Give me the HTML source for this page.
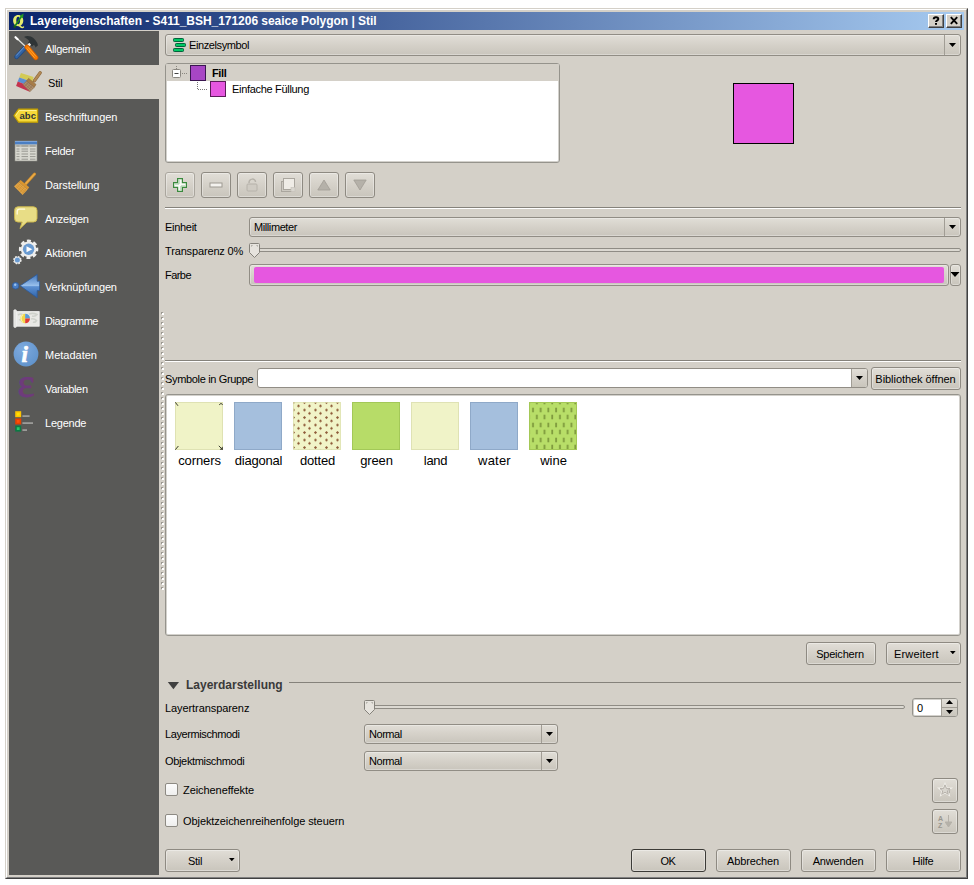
<!DOCTYPE html>
<html lang="de">
<head>
<meta charset="utf-8">
<title>Layereigenschaften - S411_BSH_171206 seaice Polygon | Stil</title>
<style>
html,body{margin:0;padding:0;background:#fff;}
body{width:974px;height:885px;position:relative;overflow:hidden;font-family:"Liberation Sans",sans-serif;font-size:11px;color:#000;}
*{box-sizing:border-box;}
.abs{position:absolute;}
#win{left:5px;top:8px;width:963px;height:871px;background:#d4d0c8;
 border-top:1px solid #d4d0c8;border-left:1px solid #d4d0c8;border-right:1px solid #404040;border-bottom:1px solid #404040;}
#win2{left:6px;top:9px;width:961px;height:869px;
 border-top:1px solid #fff;border-left:1px solid #fff;border-right:1px solid #808080;border-bottom:1px solid #808080;}
#title{left:9px;top:12px;width:955px;height:18px;background:linear-gradient(to right,#0a246a 0%,#a6caf0 100%);}
#title .t{position:absolute;left:21px;top:2px;color:#fff;font-weight:bold;font-size:12px;letter-spacing:-0.04px;line-height:14px;white-space:nowrap;}
.tb{position:absolute;top:2px;width:16px;height:14px;background:#d4d0c8;border-top:1px solid #fff;border-left:1px solid #fff;border-right:1px solid #404040;border-bottom:1px solid #404040;box-shadow:inset -1px -1px 0 #808080;}
#side{left:9px;top:31px;width:150px;height:844px;background:#595957;}
.it{position:absolute;left:0;width:150px;height:34px;color:#fff;white-space:nowrap;}
.it span{position:absolute;left:36px;top:11px;line-height:14px;}
.it svg{position:absolute;}
.it.sel{background:#d4d0c8;color:#000;}
.it.sel span{left:39px;}
.lbl{position:absolute;white-space:nowrap;line-height:14px;}
.btn{position:absolute;border:1px solid #8e8a82;border-radius:3px;background:linear-gradient(#e1ded7,#d6d2ca 45%,#c9c5bc);box-shadow:inset 0 0 0 1px rgba(255,255,255,.35);text-align:center;line-height:23px;white-space:nowrap;padding-right:1px;}
.combo{position:absolute;border:1px solid #918d85;border-radius:3px;background:linear-gradient(#e1ded7,#d6d2ca 45%,#c9c5bc);box-shadow:inset 0 0 0 1px rgba(255,255,255,.3);line-height:18px;white-space:nowrap;}
.combo .arr{position:absolute;right:0;top:0;bottom:0;width:16px;border-left:1px solid #a19d95;}
.tri{position:absolute;width:7px;height:4px;background:#000;clip-path:polygon(0 0,100% 0,50% 100%);}
.tri.up{clip-path:polygon(50% 0,100% 100%,0 100%);}
.hline{position:absolute;height:2px;border-top:1px solid #85827b;border-bottom:1px solid #fff;}
.box{position:absolute;background:#fff;border:1px solid #95938c;border-radius:3px;box-shadow:inset 0 0 0 1px #d3d1cc;}
.cb{position:absolute;width:13px;height:13px;border:1px solid #8d8a83;border-radius:2px;background:linear-gradient(#fcfcfc,#efefee);}
.sym{position:absolute;top:402px;width:48px;height:48px;}
.sl{position:absolute;top:453px;width:70px;text-align:center;font-size:13px;line-height:15px;white-space:nowrap;}
</style>
</head>
<body>
<div id="win" class="abs"></div>
<div id="win2" class="abs"></div>

<!-- title bar -->
<div id="title" class="abs">
 <svg style="position:absolute;left:2px;top:1px" width="16" height="16" viewBox="0 0 16 16">
  <path fill-rule="evenodd" fill="#e6ec6c" d="M7.2 2C10.2 2 12.3 4.4 12.3 7.6C12.3 10.8 10.2 13.2 7.2 13.2C4.2 13.2 2.1 10.8 2.1 7.6C2.1 4.4 4.2 2 7.2 2ZM7.2 3.8C6 3.8 5.3 5.4 5.3 7.6C5.3 9.8 6 11.4 7.2 11.4C8.4 11.4 9.1 9.8 9.1 7.6C9.1 5.4 8.4 3.8 7.2 3.8Z"/>
  <path d="M6.4 11.2C8 11 9.4 12.2 10.4 13.2C11.4 14 12.4 13.8 13 13L13.2 14.2C12.4 15.4 10.6 15.6 9.4 14.6C8.4 13.8 7.6 12.8 6.4 12.8Z" fill="#e6ec6c"/>
  <path d="M3.6 13.6L10.6 3.2" stroke="#1c861c" stroke-width="1.7"/>
  <path d="M12.6 0.6L12 5.2L8.6 3Z" fill="#249a24"/>
  <path d="M2.2 12.6L5.6 13.4L3.2 15.6Z" fill="#145a14"/>
 </svg>
 <div class="t">Layereigenschaften - S411_BSH_171206 seaice Polygon | Stil</div>
 <div class="tb" style="left:919px"><svg width="14" height="12" viewBox="0 0 14 12" style="position:absolute;left:0;top:0"><path d="M4.7 4.3 C4.7 1.7 9.3 1.7 9.3 4 C9.3 5.4 7 5.2 7 7" fill="none" stroke="#000" stroke-width="2"/><rect x="6" y="8" width="2" height="1.8" fill="#000"/></svg></div>
 <div class="tb" style="left:937px"><svg width="14" height="12" viewBox="0 0 14 12" style="position:absolute;left:0;top:0"><path d="M3.8 2.2 L10.2 8.8 M10.2 2.2 L3.8 8.8" stroke="#000" stroke-width="1.9"/></svg></div>
</div>

<!-- sidebar -->
<div id="side" class="abs">
 <div class="it" style="top:0"><svg style="left:4px;top:4px" width="26" height="26" viewBox="0 0 26 26"><path d="M12.2 12.6 L3.6 21.8" stroke="#1f4a86" stroke-width="4.6" stroke-linecap="round"/><path d="M12.2 12.6 L3.6 21.8" stroke="#3465a4" stroke-width="3" stroke-linecap="round"/><path d="M11 12.2 L3.4 20.3" stroke="#6d97cf" stroke-width="1" stroke-linecap="round"/><path d="M4 3.6 L12.8 11.8" stroke="#dfe1dc" stroke-width="1.3"/><path d="M2.5 2.2 L4.6 4.2" stroke="#fff" stroke-width="2.2" stroke-linecap="round"/><path d="M11 2 C13.4 0.2 18 0.8 20.6 3.2 C23 5.4 25 8.4 24.9 10.6 L22.4 12.6 C22.3 11 21.6 10.2 20.4 10 L19 11.6 L15 7.8 L16.2 6 C14.8 4 13 3 11 2Z" fill="#2e3436"/><path d="M14.6 11.1 L17.2 8.8" stroke="#eeeeec" stroke-width="2.6"/><path d="M14 12.2 L22.8 22.6" stroke="#ce5c00" stroke-width="5" stroke-linecap="round"/><path d="M14 12.2 L22.8 22.6" stroke="#f57900" stroke-width="3.6" stroke-linecap="round"/><path d="M15.2 12.4 L23.2 21.6 M13.6 13.4 L21.6 22.8" stroke="#fcaf3e" stroke-width=".8"/></svg><span style="letter-spacing:-0.34px">Allgemein</span></div>
 <div class="it sel" style="top:34px"><svg style="left:6px;top:4px" width="27" height="26" viewBox="0 0 27 26"><path d="M5.9 4.1 L18.6 8.1 L17.3 13 L4.3 8.4Z" fill="#d3ca55"/><path d="M4.3 8.4 L17.3 13 L16 17.8 L2.7 12.6Z" fill="#5c8fd3"/><path d="M2.7 12.6 L16 17.8 L14.7 22.7 L1.1 16.9Z" fill="#c4334f"/><path d="M25.2 3.7 L19.4 11.8" stroke="#8f6a3c" stroke-width="3.2" stroke-linecap="round"/><path d="M25.2 3.7 L19.4 11.8" stroke="#b48a55" stroke-width="2" stroke-linecap="round"/><path d="M13.6 9.4 L21 15.4 L19.2 18.4 L11.4 12.2Z" fill="#a77c49" stroke="#8a6536" stroke-width=".6"/><path d="M11.4 12.2 L19.2 18.4 L14.9 22.6 L8 15.6Z" fill="#b08f6c" stroke="#8f7150" stroke-width=".6"/><path d="M10.3 13.3 L17.8 19.6 M9.2 14.5 L16.4 21 M13.2 13.8 L9.6 17.4 M15.2 15.4 L11.4 19.2 M17.2 17 L13.2 20.8" stroke="#8a6c4c" stroke-width=".5"/></svg><span style="letter-spacing:-0.2px">Stil</span></div>
 <div class="it" style="top:68px"><svg style="left:4px;top:9px" width="26" height="16" viewBox="0 0 26 16"><path d="M1 7.7 L5.6 1.2 H24.6 V14.2 H5.6Z" fill="#f5d93a" stroke="#c4a000" stroke-width="1.2" stroke-linejoin="round"/><path d="M2.6 7.7 L6.2 2.5 H23.4" fill="none" stroke="#fdf08c" stroke-width="1"/><text x="6.4" y="11.2" font-family="Liberation Sans,sans-serif" font-weight="bold" font-size="9.5" fill="#2e3436" letter-spacing=".1">abc</text></svg><span style="letter-spacing:-0.08px">Beschriftungen</span></div>
 <div class="it" style="top:102px"><svg style="left:5px;top:7px" width="24" height="22" viewBox="0 0 24 22"><rect x="1" y="1" width="22" height="20" fill="#d9d9d1" stroke="#8d8d85" stroke-width=".6"/><rect x="1" y="1" width="22" height="3.6" fill="#4b7fc3"/><rect x="1" y="1" width="22" height="1" fill="#7ba3d8"/><rect x="1" y="4.6" width="22" height="2.2" fill="#b9b9b1"/><path d="M2.5 6H5.5M7.5 6H14M16 6H21.5 M2.5 9H5.5M7.5 9H14M16 9H21.5 M2.5 11.2H5.5M7.5 11.2H14M16 11.2H21.5 M2.5 14H5.5M7.5 14H14M16 14H21.5 M2.5 16.6H5.5M7.5 16.6H14M16 16.6H21.5 M2.5 19.2H5.5M7.5 19.2H14M16 19.2H21.5" stroke="#8e8e88" stroke-width=".9"/></svg><span style="letter-spacing:-0.27px">Felder</span></div>
 <div class="it" style="top:136px"><svg style="left:4px;top:4px" width="26" height="26" viewBox="0 0 26 26"><path d="M21.6 3 L13 12.4" stroke="#c98a2a" stroke-width="3" stroke-linecap="round"/><path d="M21.6 3 L13 12.4" stroke="#e9aa48" stroke-width="1.6" stroke-linecap="round"/><path d="M7.6 9 L16.2 16.2 L14.6 18.4 L5.8 11Z" fill="#d9952f"/><path d="M5.8 11 L14.6 18.4 L9.6 24 L1 15.2Z" fill="#e2a648"/><path d="M4.8 12.2 L13.4 19.8 M3.6 13.4 L12.2 21.2 M2.4 14.4 L11 22.4 M7.6 12.6 L3.4 17.4 M9.6 14.2 L5.4 19.2 M11.6 16 L7.4 21 M13.4 17.6 L9 22.8" stroke="#c78728" stroke-width=".5"/></svg><span style="letter-spacing:-0.12px">Darstellung</span></div>
 <div class="it" style="top:170px"><svg style="left:4px;top:4px" width="26" height="26" viewBox="0 0 26 26"><path d="M5 1.8 H20.4 Q24 1.8 24 5.4 V13.4 Q24 17 20.4 17 H14 L7 23.6 L9.2 17 H5 Q1.6 17 1.6 13.4 V5.4 Q1.6 1.8 5 1.8Z" fill="#e8dd86" stroke="#cdb84e" stroke-width="1"/><path d="M4.2 9 V6.6 Q4.2 4.2 6.6 4.2 H11.6" fill="none" stroke="#fffbe0" stroke-width="1.3" stroke-linecap="round"/></svg><span style="letter-spacing:-0.29px">Anzeigen</span></div>
 <div class="it" style="top:204px"><svg style="left:3px;top:3px" width="28" height="28" viewBox="0 0 28 28"><circle cx="16.6" cy="11.3" r="8.3" fill="none" stroke="#eeeeec" stroke-width="2.8" stroke-dasharray="3.9 2.62" stroke-dashoffset="1.9"/><circle cx="16.6" cy="11.3" r="7.8" fill="#eeeeec"/><circle cx="16.6" cy="11.3" r="5.7" fill="#6a9bd1"/><path d="M14.5 8.3 L20.3 11.3 L14.5 14.3Z" fill="#fff"/><circle cx="5.4" cy="22.1" r="3.5" fill="none" stroke="#eeeeec" stroke-width="1.5" stroke-dasharray="1.7 1.05"/><circle cx="5.4" cy="22.1" r="3.4" fill="#eeeeec"/><circle cx="5.4" cy="22.1" r="2.5" fill="#6a9bd1"/></svg><span style="letter-spacing:-0.17px">Aktionen</span></div>
 <div class="it" style="top:238px"><svg style="left:2px;top:3px" width="30" height="28" viewBox="0 0 30 28"><defs><linearGradient id="ga" x1="0" y1="0" x2="0" y2="1"><stop offset="0" stop-color="#3f74ba"/><stop offset=".5" stop-color="#9cc3ee"/><stop offset=".52" stop-color="#5c90d2"/><stop offset="1" stop-color="#2f64aa"/></linearGradient></defs><circle cx="4.6" cy="13.8" r="3.3" fill="#4a7ec4" stroke="#2c5a9c" stroke-width=".8"/><circle cx="4.2" cy="12.8" r="1.2" fill="#9cc3ee"/><path d="M9.2 13.8 L26.2 2.4 V9.2 H28.6 V18.6 H26.2 V25.8Z" fill="url(#ga)" stroke="#2c5a9c" stroke-width=".8" stroke-linejoin="round"/></svg><span style="letter-spacing:-0.17px">Verknüpfungen</span></div>
 <div class="it" style="top:272px"><svg style="left:4px;top:6px" width="27" height="20" viewBox="0 0 27 20"><rect x="3.6" y="2.6" width="22.6" height="14.6" fill="#e9e9e5" stroke="#f6f6f4" stroke-width=".8"/><path d="M5 6 Q8 4 10 6 T14 9 M16 5 Q20 3.5 24 5.5 Q22 8 19 7 M18 10 Q21 9 23.5 11.5 Q22 14 20 13 M6 11 Q8 10 9 13" fill="none" stroke="#cfd2cb" stroke-width="1.6"/><rect x=".8" y=".8" width="2.6" height="17.6" rx=".8" fill="#e4e4e0" stroke="#fafafa" stroke-width=".6"/><path d="M12.2 4.7 A4.8 4.8 0 0 0 12.2 14.3Z" fill="#f2d648"/><path d="M12.2 4.7 A4.8 4.8 0 0 1 17 9.5 H12.2Z" fill="#5b9bd5"/><path d="M17 9.5 A4.8 4.8 0 0 1 12.2 14.3 V9.5Z" fill="#e23a32"/><path d="M10.2 5.4 A5 5 0 0 0 10.2 13.6" fill="none" stroke="#fbf0a8" stroke-width="1.2"/></svg><span style="letter-spacing:-0.42px">Diagramme</span></div>
 <div class="it" style="top:306px"><svg style="left:4px;top:4px" width="26" height="26" viewBox="0 0 26 26"><defs><radialGradient id="gi" cx=".35" cy=".3" r=".8"><stop offset="0" stop-color="#7eaade"/><stop offset="1" stop-color="#5f92cb"/></radialGradient></defs><circle cx="13" cy="13" r="12.4" fill="url(#gi)"/><text x="8.4" y="21.4" font-family="Liberation Serif,serif" font-style="italic" font-weight="bold" font-size="23" fill="#fff" stroke="#fff" stroke-width=".7">i</text></svg><span style="letter-spacing:0.00px">Metadaten</span></div>
 <div class="it" style="top:340px"><svg style="left:6px;top:2px" width="22" height="28" viewBox="0 0 22 28"><text x="2.4" y="24.4" font-family="Liberation Serif,serif" font-size="41" fill="#6e3b7c" stroke="#6e3b7c" stroke-width=".8">ε</text></svg><span style="letter-spacing:-0.33px">Variablen</span></div>
 <div class="it" style="top:374px"><svg style="left:5px;top:5px" width="24" height="24" viewBox="0 0 24 24"><rect x="1.2" y="1.2" width="6" height="6" fill="#ffc400"/><rect x="2.8" y="2.8" width="2.8" height="2.8" fill="#ffe100"/><rect x="1.2" y="8.4" width="6" height="6" fill="#e64100"/><rect x="2.8" y="10" width="2.8" height="2.8" fill="#ff4f0a"/><rect x="1.2" y="15.6" width="6" height="6" fill="#0b7a44"/><rect x="2.8" y="17.2" width="2.8" height="2.8" fill="#25c869"/><rect x="8.4" y="5.2" width="7.2" height="1.8" fill="#9b9b98"/><rect x="8.4" y="12.2" width="10.6" height="1.8" fill="#9b9b98"/><rect x="8.4" y="19.2" width="4.6" height="1.8" fill="#9b9b98"/></svg><span style="letter-spacing:-0.24px">Legende</span></div>
</div>

<!-- content placeholder -->
<div id="content">
<svg class="abs" style="left:161px;top:312px" width="3" height="278" viewBox="0 0 3 278"><defs><pattern id="sp" width="3" height="5" patternUnits="userSpaceOnUse"><rect x="0" y="0" width="2" height="2" fill="#9c9992"/><rect x="1" y="1" width="2" height="2" fill="#fff"/></pattern></defs><rect width="3" height="278" fill="url(#sp)"/></svg>
<!-- renderer combo -->
<div class="combo" style="left:165px;top:34px;width:796px;height:22px;">
 <svg style="position:absolute;left:7px;top:3px" width="14" height="14" viewBox="0 0 14 14">
  <rect x="0.5" y="0.5" width="10" height="3" rx=".8" fill="#00c864" stroke="#04603c"/>
  <rect x="2.5" y="5.5" width="10" height="3" rx=".8" fill="#00c864" stroke="#04603c"/>
  <rect x="0.5" y="10.5" width="10" height="3" rx=".8" fill="#00c864" stroke="#04603c"/>
 </svg>
 <span class="lbl" style="left:23px;top:3px;letter-spacing:-0.40px">Einzelsymbol</span>
 <div class="arr"><div class="tri" style="left:4px;top:8px"></div></div>
</div>

<!-- symbol layer tree -->
<div class="box" style="left:165px;top:63px;width:395px;height:100px;">
 <div style="position:absolute;left:0;top:0;width:393px;height:17px;background:#d4d0c8;border-radius:1px 1px 0 0"></div>
 <svg style="position:absolute;left:6px;top:2px" width="20" height="13" viewBox="0 0 20 13">
  <rect x="0.5" y="3.5" width="8" height="8" rx="1" fill="#fff" stroke="#8a8780"/>
  <path d="M2.5 7.5H6.5" stroke="#444" stroke-width="1"/>
  <path d="M4 0h1v1h-1zM4 2h1v1h-1zM10 7h1v1h-1zM12 7h1v1h-1zM14 7h1v1h-1z" fill="#8a8780"/>
 </svg>
 <div style="position:absolute;left:24px;top:1px;width:16px;height:16px;background:#a746c4;border:1px solid #3a1650"></div>
 <span class="lbl" style="left:46px;top:2px;font-weight:bold;letter-spacing:-0.35px">Fill</span>
 <svg style="position:absolute;left:30px;top:17px" width="14" height="10" viewBox="0 0 14 10">
  <path d="M1.5 1V8.5H12" fill="none" stroke="#777" stroke-width="1" stroke-dasharray="1 1"/>
 </svg>
 <div style="position:absolute;left:44px;top:17px;width:16px;height:16px;background:#e657e0;border:1px solid #5a1c58"></div>
 <span class="lbl" style="left:66px;top:18px;letter-spacing:-0.31px">Einfache Füllung</span>
</div>

<!-- preview -->
<div class="abs" style="left:733px;top:83px;width:61px;height:61px;background:#e657e0;border:1px solid #000"></div>

<!-- layer buttons -->
<div class="btn" style="left:165px;top:172px;width:30px;height:26px;border-color:#aaa69e">
 <svg style="position:absolute;left:7px;top:5px" width="14" height="14" viewBox="0 0 14 14"><path d="M4.6 0.6H9.4V4.6H13.4V9.4H9.4V13.4H4.6V9.4H0.6V4.6H4.6Z" fill="#f8faf6" stroke="#3b8a3e" stroke-width="1.2"/><path d="M6 2V6H2M8 12V8H12" fill="none" stroke="#9cc79d" stroke-width="1"/></svg>
</div>
<div class="btn" style="left:201px;top:172px;width:30px;height:26px;">
 <svg style="position:absolute;left:7px;top:5px" width="14" height="14" viewBox="0 0 14 14"><rect x="1" y="5" width="12" height="4" fill="#f4f2ee" stroke="#9e9a92" stroke-width="1"/></svg>
</div>
<div class="btn" style="left:237px;top:172px;width:30px;height:26px;">
 <svg style="position:absolute;left:7px;top:4px" width="14" height="16" viewBox="0 0 14 16"><path d="M4 6C4 1 10.5 1 10.5 5" fill="none" stroke="#b6b2aa" stroke-width="1.5"/><rect x="2" y="7" width="10" height="7" rx="1" fill="#cfcbc3" stroke="#b6b2aa"/></svg>
</div>
<div class="btn" style="left:273px;top:172px;width:30px;height:26px;">
 <svg style="position:absolute;left:7px;top:5px" width="15" height="15" viewBox="0 0 15 15"><rect x="0.5" y="3.5" width="10" height="10" fill="#cdc9c1" stroke="#aaa69e"/><rect x="2.5" y="0.5" width="11" height="11" fill="#efece6" stroke="#aaa69e"/><rect x="10" y="9.5" width="4" height="4" fill="#d9d6cf" stroke="#c3bfb7" stroke-width=".6"/></svg>
</div>
<div class="btn" style="left:309px;top:172px;width:30px;height:26px;">
 <svg style="position:absolute;left:7px;top:6px" width="14" height="12" viewBox="0 0 14 12"><path d="M7 1L13.2 11H0.8Z" fill="#b5b1a9" stroke="#a19d95" stroke-width=".8"/></svg>
</div>
<div class="btn" style="left:345px;top:172px;width:30px;height:26px;">
 <svg style="position:absolute;left:7px;top:6px" width="14" height="12" viewBox="0 0 14 12"><path d="M7 11L13.2 1H0.8Z" fill="#b5b1a9" stroke="#a19d95" stroke-width=".8"/></svg>
</div>

<div class="hline" style="left:165px;top:207px;width:796px"></div>

<!-- unit / transparency / colour -->
<span class="lbl" style="left:165px;top:220px;letter-spacing:-0.30px">Einheit</span>
<div class="combo" style="left:249px;top:217px;width:712px;height:20px;">
 <span class="lbl" style="left:4px;top:2px;letter-spacing:-0.41px">Millimeter</span>
 <div class="arr"><div class="tri" style="left:4px;top:7px"></div></div>
</div>
<span class="lbl" style="left:165px;top:244px;letter-spacing:-0.15px">Transparenz 0%</span>
<div class="abs" style="left:251px;top:248px;width:710px;height:4px;border:1px solid #8f8c85;border-radius:2px;background:#dcd9d2"></div>
<svg class="abs" style="left:249px;top:243px" width="11" height="15" viewBox="0 0 11 15"><path d="M1.5 0.5H9.5Q10.5 0.5 10.5 1.5V9.5L5.5 14.5L0.5 9.5V1.5Q0.5 0.5 1.5 0.5Z" fill="#e6e3dd" stroke="#85827b"/><path d="M2.5 3.5V2.5H3.5M7.5 2.5H8.5V3.5" fill="none" stroke="#a5a29b" stroke-width="1"/></svg>
<span class="lbl" style="left:165px;top:268px;letter-spacing:-0.56px">Farbe</span>
<div class="combo" style="left:249px;top:264px;width:700px;height:22px;">
 <div style="position:absolute;left:4px;top:2px;right:4px;bottom:2px;background:#e657e0;border-radius:2px"></div>
</div>
<div class="combo" style="left:950px;top:264px;width:11px;height:22px;overflow:hidden"><div class="tri" style="left:-0.5px;top:7px;width:9px;height:5px"></div></div>

<div class="hline" style="left:165px;top:360px;width:796px"></div>

<!-- symbols in group -->
<span class="lbl" style="left:165px;top:372px;letter-spacing:-0.34px">Symbole in Gruppe</span>
<div class="combo" style="left:257px;top:368px;width:611px;height:20px;background:#fff">
 <div class="arr" style="background:linear-gradient(#e1ded7,#d6d2ca 45%,#c9c5bc);border-radius:0 2px 2px 0"><div class="tri" style="left:4px;top:7px"></div></div>
</div>
<div class="btn" style="left:871px;top:367px;width:90px;height:23px;letter-spacing:-0.05px">Bibliothek öffnen</div>

<div class="box" style="left:165px;top:394px;width:796px;height:242px;"></div>
<svg class="sym abs" style="left:175px" width="48" height="48" viewBox="0 0 48 48"><rect x=".5" y=".5" width="47" height="47" fill="#f0f3c7" stroke="#dfe2b3"/><path d="M0.3 0.3L3 3.8M47.7 2.6Q46 0.2 44.2 2.8M0.3 47.7L3.4 44M43.8 43.8L47.5 47.5" fill="none" stroke="#3a3b2e" stroke-width="1"/><path d="M47.8 44.6V47.8H44.6Z" fill="#3a3b2e"/></svg>
<div class="sym abs" style="left:234px;background:#a5bfdd;border:1px solid #8fa9c8"></div>
<svg class="sym abs" style="left:293px" width="48" height="48" viewBox="0 0 48 48"><defs><pattern id="pd" width="11" height="7.5" patternUnits="userSpaceOnUse"><path d="M0.50 -1.05L2.05 0.50L0.50 2.05L-1.05 0.50ZM11.50 -1.05L13.05 0.50L11.50 2.05L9.95 0.50ZM0.50 6.45L2.05 8.00L0.50 9.55L-1.05 8.00ZM11.50 6.45L13.05 8.00L11.50 9.55L9.95 8.00ZM5.50 2.35L7.05 3.90L5.50 5.45L3.95 3.90ZM5.50 -5.15L7.05 -3.60L5.50 -2.05L3.95 -3.60ZM5.50 9.85L7.05 11.40L5.50 12.95L3.95 11.40Z" fill="#8f5c3a"/></pattern></defs><rect width="48" height="48" fill="#f1f4c8"/><rect width="48" height="48" fill="url(#pd)"/><rect x=".5" y=".5" width="47" height="47" fill="none" stroke="#dfe2b3" stroke-opacity=".8"/></svg>
<div class="sym abs" style="left:352px;background:#b7dc68;border:1px solid #a3c858"></div>
<div class="sym abs" style="left:411px;background:#f0f3c8;border:1px solid #dfe2b4"></div>
<div class="sym abs" style="left:470px;background:#a5bfdd;border:1px solid #8fa9c8"></div>
<svg class="sym abs" style="left:529px" width="48" height="48" viewBox="0 0 48 48"><defs><pattern id="pw" width="7.7" height="15" patternUnits="userSpaceOnUse"><rect x="3.1" y="5.7" width="1.8" height="4.6" fill="#7e9a3d"/><rect x="-0.75" y="-2.3" width="1.8" height="4.6" fill="#7e9a3d"/><rect x="6.95" y="-2.3" width="1.8" height="4.6" fill="#7e9a3d"/><rect x="-0.75" y="12.7" width="1.8" height="4.6" fill="#7e9a3d"/><rect x="6.95" y="12.7" width="1.8" height="4.6" fill="#7e9a3d"/></pattern></defs><rect width="48" height="48" fill="#b8de68"/><rect width="48" height="48" fill="url(#pw)"/><rect x=".5" y=".5" width="47" height="47" fill="none" stroke="#a4c856"/></svg>
<div class="sl" style="left:164.5px;letter-spacing:-0.10px">corners</div>
<div class="sl" style="left:223.5px;letter-spacing:-0.21px">diagonal</div>
<div class="sl" style="left:282.5px;letter-spacing:-0.17px">dotted</div>
<div class="sl" style="left:341.5px;letter-spacing:-0.10px">green</div>
<div class="sl" style="left:400.5px;letter-spacing:-0.30px">land</div>
<div class="sl" style="left:459.5px;letter-spacing:0.20px">water</div>
<div class="sl" style="left:518.5px;letter-spacing:0.00px">wine</div>

<div class="btn" style="left:806px;top:642px;width:70px;height:23px;letter-spacing:-0.21px;padding-right:2px">Speichern</div>
<div class="btn" style="left:886px;top:642px;width:75px;height:23px;text-align:left;padding-left:7px;letter-spacing:0.15px">Erweitert<div class="tri" style="left:63px;top:8px;width:5.6px;height:3.2px"></div></div>

<!-- layer rendering group -->
<svg class="abs" style="left:167px;top:681px" width="13" height="9" viewBox="0 0 13 9"><path d="M0.8 1H12L6.4 8.2Z" fill="#404040"/></svg>
<span class="lbl" style="left:186px;top:678px;font-weight:bold;font-size:12px;color:#3a3a3a">Layerdarstellung</span>
<div class="abs" style="left:289px;top:682px;width:672px;height:1px;background:#85827b"></div>

<span class="lbl" style="left:165px;top:701px;letter-spacing:-0.08px">Layertransparenz</span>
<div class="abs" style="left:366px;top:705px;width:539px;height:4px;border:1px solid #8f8c85;border-radius:2px;background:#dcd9d2"></div>
<svg class="abs" style="left:364px;top:700px" width="11" height="15" viewBox="0 0 11 15"><path d="M1.5 0.5H9.5Q10.5 0.5 10.5 1.5V9.5L5.5 14.5L0.5 9.5V1.5Q0.5 0.5 1.5 0.5Z" fill="#e6e3dd" stroke="#85827b"/><path d="M2.5 3.5V2.5H3.5M7.5 2.5H8.5V3.5" fill="none" stroke="#a5a29b" stroke-width="1"/></svg>
<div class="box" style="left:912px;top:698px;width:46px;height:19px;border-radius:3px">
 <span class="lbl" style="left:4px;top:2px;letter-spacing:-0.3px">0</span>
 <div style="position:absolute;right:0;top:0;width:16px;height:17px;border-left:1px solid #a19d95;background:linear-gradient(#e1ded7,#c9c5bc);border-radius:0 2px 2px 0">
  <div style="position:absolute;left:0;top:8px;width:15px;height:1px;background:#a19d95"></div>
  <div class="tri up" style="left:4px;top:1px"></div>
  <div class="tri" style="left:4px;top:11px"></div>
 </div>
</div>

<span class="lbl" style="left:165px;top:727px;letter-spacing:-0.40px">Layermischmodi</span>
<div class="combo" style="left:364px;top:724px;width:194px;height:20px;">
 <span class="lbl" style="left:4px;top:2px;letter-spacing:-0.45px">Normal</span>
 <div class="arr"><div class="tri" style="left:4px;top:7px"></div></div>
</div>
<span class="lbl" style="left:165px;top:754px;letter-spacing:-0.34px">Objektmischmodi</span>
<div class="combo" style="left:364px;top:751px;width:194px;height:20px;">
 <span class="lbl" style="left:4px;top:2px;letter-spacing:-0.45px">Normal</span>
 <div class="arr"><div class="tri" style="left:4px;top:7px"></div></div>
</div>

<div class="cb" style="left:165px;top:783px"></div>
<span class="lbl" style="left:183px;top:783px;letter-spacing:-0.07px">Zeicheneffekte</span>
<div class="cb" style="left:165px;top:814px"></div>
<span class="lbl" style="left:183px;top:814px;letter-spacing:-0.08px">Objektzeichenreihenfolge steuern</span>

<div class="btn" style="left:932px;top:778px;width:26px;height:25px;">
 <svg style="position:absolute;left:4px;top:3px" width="17" height="17" viewBox="0 0 17 17"><path d="M8 1.5L10 6H14.5L11 9L12.3 13.5L8 10.8L3.7 13.5L5 9L1.5 6H6Z" fill="#d9d6cf" stroke="#f1efea" stroke-width="1.2"/><path d="M8 2.8L9.6 6.6H13L10.3 8.9L11.3 12.4L8 10.2L4.7 12.4L5.7 8.9L3 6.6H6.4Z" fill="none" stroke="#a9a59d" stroke-width=".8"/><path d="M12.2 11V8.6Q12.2 7.6 13.4 7.6" fill="none" stroke="#a9a59d" stroke-width="1"/></svg>
</div>
<div class="btn" style="left:932px;top:809px;width:26px;height:25px;">
 <svg style="position:absolute;left:4px;top:3px" width="17" height="17" viewBox="0 0 17 17"><text x="1" y="7.5" font-family="Liberation Sans,sans-serif" font-size="7" font-weight="bold" fill="#99968f">A</text><text x="1" y="14.5" font-family="Liberation Sans,sans-serif" font-size="7" font-weight="bold" fill="#99968f">Z</text><path d="M11.5 2V9H8.2L11.5 14L14.8 9H11.5" fill="#b5b1a9" stroke="#b5b1a9" stroke-width="1"/></svg>
</div>

<!-- bottom buttons -->
<div class="btn" style="left:165px;top:849px;width:75px;height:23px;text-align:left;padding-left:22px;letter-spacing:-0.3px">Stil<div class="tri" style="left:63px;top:8px;width:5.6px;height:3.2px"></div></div>
<div class="btn" style="left:631px;top:849px;width:75px;height:23px;border-color:#3c3b37;letter-spacing:-0.5px">OK</div>
<div class="btn" style="left:716px;top:849px;width:75px;height:23px;letter-spacing:-0.15px">Abbrechen</div>
<div class="btn" style="left:801px;top:849px;width:75px;height:23px;letter-spacing:-0.16px">Anwenden</div>
<div class="btn" style="left:886px;top:849px;width:75px;height:23px;letter-spacing:-0.18px">Hilfe</div>
</div>
</body>
</html>
